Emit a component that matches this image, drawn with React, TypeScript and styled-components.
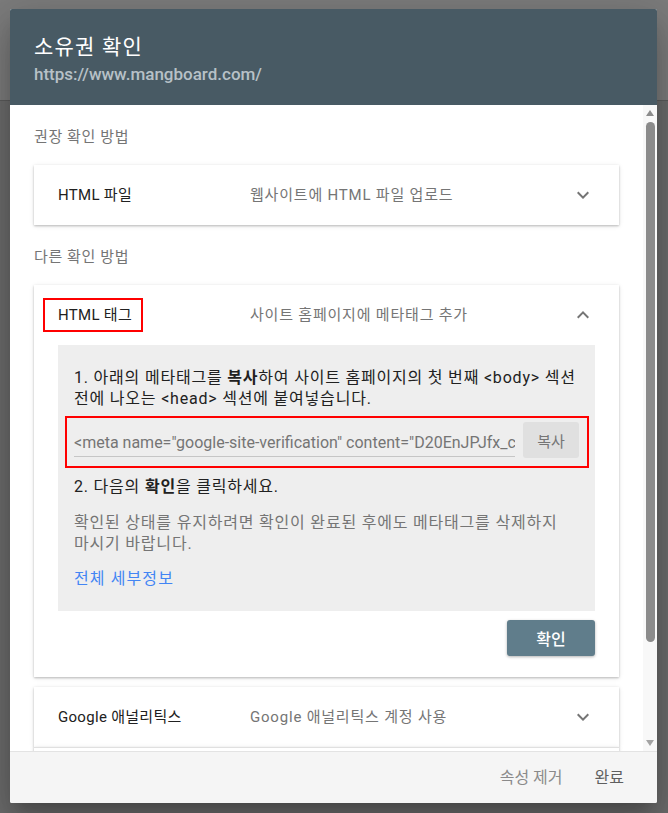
import React from "react";
import styled, { createGlobalStyle } from "styled-components";

const Global = createGlobalStyle`
  html, body { margin: 0; padding: 0; }
  body {
    width: 668px;
    height: 813px;
    overflow: hidden;
    font-family: Roboto, "Noto Sans CJK KR", sans-serif;
    word-break: keep-all;
  }
`;

const Screen = styled.div`
  position: relative;
  width: 668px;
  height: 813px;
  background: #6c6c6c;
  overflow: hidden;
`;

const PageHeader = styled.div`
  height: 100px;
  background: #7c7c7c;
  border-bottom: 1px solid #5c5c5c;
`;

const Dialog = styled.div`
  position: absolute;
  top: 9px;
  left: 10px;
  width: 647px;
  height: 794px;
  display: flex;
  flex-direction: column;
  background: #fff;
  border-radius: 2px;
  overflow: hidden;
  box-shadow: 0 11px 15px -7px rgba(0, 0, 0, 0.2),
    0 24px 38px 3px rgba(0, 0, 0, 0.14), 0 9px 46px 8px rgba(0, 0, 0, 0.12);
`;

const Header = styled.header`
  flex: none;
  height: 96px;
  box-sizing: border-box;
  padding: 25px 24px 0;
  background: #485a64;
`;

const Title = styled.h1`
  margin: 0;
  font-size: 21px;
  line-height: 26px;
  font-weight: 400;
  letter-spacing: 1.2px;
  color: #ffffff;
`;

const Url = styled.div`
  margin-top: 4px;
  font-size: 17px;
  line-height: 20px;
  font-weight: 500;
  color: #b7c1c7;
`;

const Body = styled.div`
  flex: 1;
  min-height: 0;
  display: flex;
`;

const Content = styled.div`
  flex: 1;
  min-width: 0;
  overflow: hidden;
  padding: 20px 24px 0;
`;

const SectionLabel = styled.div<{ $first?: boolean }>`
  margin: ${(p) => (p.$first ? "0" : "20px")} 0 16px;
  font-size: 15px;
  line-height: 24px;
  letter-spacing: 0.6px;
  color: #757575;
`;

const Card = styled.section<{ $gap?: boolean; $joined?: boolean }>`
  background: #fff;
  margin-top: ${(p) => (p.$gap ? "10px" : "0")};
  border-top: ${(p) => (p.$joined ? "1px solid #e0e0e0" : "none")};
  box-shadow: 0 1px 2px rgba(0, 0, 0, 0.22), 0 1px 5px rgba(0, 0, 0, 0.1);
`;

const CardHead = styled.div`
  height: 60px;
  display: grid;
  grid-template-columns: 192px 1fr 24px;
  align-items: center;
  padding: 0 24px;
`;

const CardTitle = styled.div`
  font-size: 15px;
  line-height: 20px;
  letter-spacing: 0.3px;
  color: #212121;
  white-space: nowrap;
`;

const Highlight = styled.span`
  display: inline-block;
  margin: -8px 0 -8px -15px;
  padding: 5px 9px 5px 13px;
  border: 2px solid #ff0000;
`;

const CardDesc = styled.div`
  font-size: 15px;
  line-height: 20px;
  letter-spacing: 0.8px;
  color: #757575;
  white-space: nowrap;
`;

const Chevron = styled.svg`
  display: block;
  width: 24px;
  height: 24px;
  fill: #757575;
`;

const Panel = styled.div`
  margin: 0 24px;
  padding: 22px 16px 22px;
  background: #eeeeee;
`;

const Step = styled.p<{ $gapTop?: number }>`
  margin: ${(p) => p.$gapTop ?? 0}px 0 0;
  font-size: 16px;
  line-height: 21px;
  letter-spacing: 0.8px;
  color: #212121;

  b {
    font-weight: 700;
  }
`;

const Note = styled.p`
  margin: 15px 0 0;
  font-size: 16px;
  line-height: 21px;
  letter-spacing: 0.8px;
  color: #757575;
`;

const DetailLink = styled.a`
  display: block;
  margin-top: 14px;
  font-size: 16px;
  line-height: 21px;
  letter-spacing: 1.1px;
  color: #4285f4;
  text-decoration: none;
`;

const CodeBox = styled.div`
  margin: 7px -10px 0 -9px;
  padding: 4px 8px 8px 7px;
  border: 2px solid #ff0000;
  display: flex;
  align-items: center;
  gap: 8px;
`;

const CodeField = styled.div`
  flex: 1;
  min-width: 0;
  height: 34px;
  box-sizing: border-box;
  display: flex;
  align-items: flex-end;
  padding-bottom: 2px;
  border-bottom: 1px solid #c6c6c6;
  overflow: hidden;
  white-space: nowrap;
  font-size: 16px;
  line-height: 22px;
  color: #757575;
`;

const CopyButton = styled.button`
  flex: none;
  width: 56px;
  height: 36px;
  border: none;
  border-radius: 3px;
  background: #e0e0e0;
  color: #757575;
  font-family: inherit;
  font-size: 15px;
  padding: 0;
`;

const ActionRow = styled.div`
  display: flex;
  justify-content: flex-end;
  padding: 9px 24px 21px;
`;

const ConfirmButton = styled.button`
  width: 88px;
  height: 36px;
  border: none;
  border-radius: 3px;
  background: #607d8b;
  color: #fff;
  font-family: inherit;
  font-size: 16px;
  font-weight: 500;
  box-shadow: 0 1px 3px rgba(0, 0, 0, 0.3);
`;

const ScrollTrack = styled.div`
  flex: none;
  width: 14px;
  display: flex;
  flex-direction: column;
  align-items: center;
  padding: 5px 0 5px;
  background: #f8f8f8;
`;

const Arrow = styled.div<{ $down?: boolean }>`
  width: 0;
  height: 0;
  border-left: 4.5px solid transparent;
  border-right: 4.5px solid transparent;
  ${(p) =>
    p.$down
      ? "border-top: 6px solid #a3a3a3;"
      : "border-bottom: 6px solid #8c8c8c;"}
`;

const Thumb = styled.div`
  margin-top: 6px;
  width: 9px;
  height: 520px;
  border-radius: 5px;
  background: #8b8b8b;
`;

const Spacer = styled.div`
  flex: 1;
`;

const Footer = styled.footer`
  flex: none;
  height: 52px;
  box-sizing: border-box;
  border-top: 1px solid #e3e3e3;
  background: #f5f5f5;
  display: flex;
  justify-content: flex-end;
  align-items: center;
  gap: 32px;
  padding: 0 33px 0 0;
`;

const FooterButton = styled.button<{ $strong?: boolean }>`
  border: none;
  background: none;
  padding: 0;
  font-family: inherit;
  font-size: 16px;
  line-height: 20px;
  color: ${(p) => (p.$strong ? "#5f5f5f" : "#8a8a8a")};
`;

const ExpandMore = () => (
  <Chevron viewBox="0 0 24 24">
    <path d="M16.59 8.59L12 13.17 7.41 8.59 6 10l6 6 6-6z" />
  </Chevron>
);

const ExpandLess = () => (
  <Chevron viewBox="0 0 24 24">
    <path d="M12 8l-6 6 1.41 1.41L12 10.83l4.59 4.58L18 14z" />
  </Chevron>
);

export default function App() {
  return (
    <>
      <Global />
      <Screen>
        <PageHeader />
        <Dialog>
          <Header>
            <Title>소유권 확인</Title>
            <Url>https://www.mangboard.com/</Url>
          </Header>
          <Body>
            <Content>
              <SectionLabel $first>권장 확인 방법</SectionLabel>
              <Card>
                <CardHead>
                  <CardTitle>HTML 파일</CardTitle>
                  <CardDesc>웹사이트에 HTML 파일 업로드</CardDesc>
                  <ExpandMore />
                </CardHead>
              </Card>

              <SectionLabel>다른 확인 방법</SectionLabel>
              <Card>
                <CardHead>
                  <CardTitle>
                    <Highlight>HTML 태그</Highlight>
                  </CardTitle>
                  <CardDesc>사이트 홈페이지에 메타태그 추가</CardDesc>
                  <ExpandLess />
                </CardHead>
                <Panel>
                  <Step>
                    1. 아래의 메타태그를 <b>복사</b>하여 사이트 홈페이지의 첫 번째
                    &lt;body&gt; 섹션 전에 나오는 &lt;head&gt; 섹션에
                    붙여넣습니다.
                  </Step>
                  <CodeBox>
                    <CodeField>
                      &lt;meta name="google-site-verification"
                      content="D20EnJPJfx_cQ7kLmW3sVbT9yRzH1aN8uXe4oGpK2dA" /&gt;
                    </CodeField>
                    <CopyButton>복사</CopyButton>
                  </CodeBox>
                  <Step $gapTop={8}>
                    2. 다음의 <b>확인</b>을 클릭하세요.
                  </Step>
                  <Note>
                    확인된 상태를 유지하려면 확인이 완료된 후에도 메타태그를
                    삭제하지 마시기 바랍니다.
                  </Note>
                  <DetailLink href="#">전체 세부정보</DetailLink>
                </Panel>
                <ActionRow>
                  <ConfirmButton>확인</ConfirmButton>
                </ActionRow>
              </Card>

              <Card $gap>
                <CardHead>
                  <CardTitle>Google 애널리틱스</CardTitle>
                  <CardDesc>Google 애널리틱스 계정 사용</CardDesc>
                  <ExpandMore />
                </CardHead>
              </Card>
              <Card $joined>
                <CardHead>
                  <CardTitle>Google 태그 관리자</CardTitle>
                  <CardDesc>Google 태그 관리자 계정 사용</CardDesc>
                  <ExpandMore />
                </CardHead>
              </Card>
            </Content>
            <ScrollTrack>
              <Arrow />
              <Thumb />
              <Spacer />
              <Arrow $down />
            </ScrollTrack>
          </Body>
          <Footer>
            <FooterButton>속성 제거</FooterButton>
            <FooterButton $strong>완료</FooterButton>
          </Footer>
        </Dialog>
      </Screen>
    </>
  );
}
